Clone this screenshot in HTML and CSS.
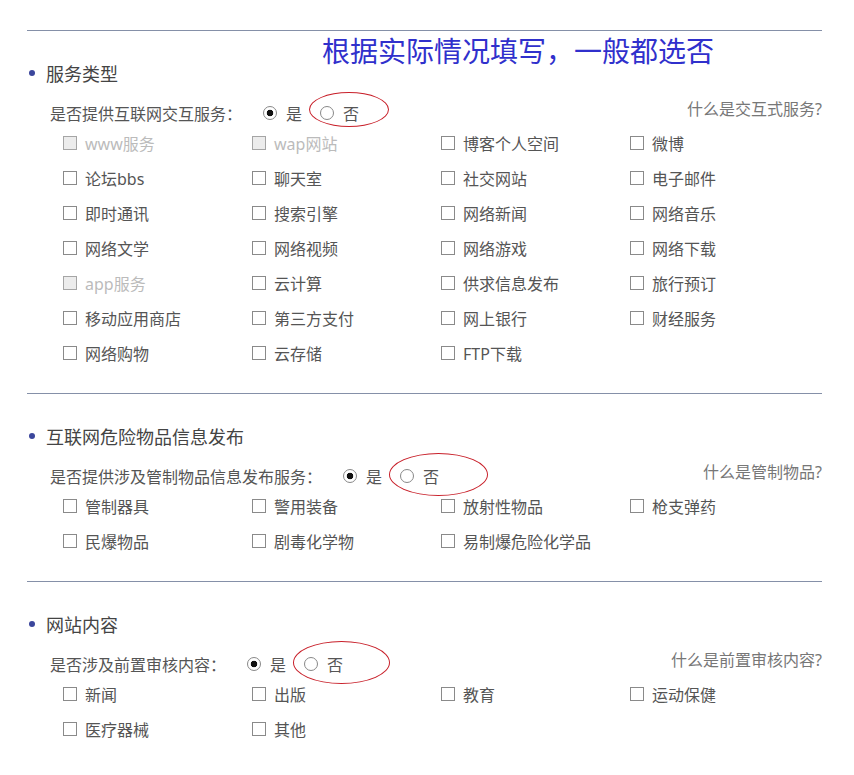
FILE: index.html
```html
<!DOCTYPE html>
<html lang="zh-CN">
<head>
    <meta charset="UTF-8">
    <title>服务类型</title>
    <link rel="stylesheet" href="styles.css">
</head>
<body>
<div class="wrap">
    <div class="note">根据实际情况填写，一般都选否</div>

    <div class="section">
        <div class="title">服务类型</div>
        <div class="ask">
            <span class="ask-label">是否提供互联网交互服务：</span>
            <label class="opt"><input type="radio" name="q1" checked> 是</label>
            <label class="opt"><input type="radio" name="q1"> 否<span class="ring ring-sm"></span></label>
            <a class="help">什么是交互式服务?</a>
        </div>
        <div class="checks">
            <label class="off"><input type="checkbox" disabled> www服务</label>
            <label class="off"><input type="checkbox" disabled> wap网站</label>
            <label><input type="checkbox"> 博客个人空间</label>
            <label><input type="checkbox"> 微博</label>
            <label><input type="checkbox"> 论坛bbs</label>
            <label><input type="checkbox"> 聊天室</label>
            <label><input type="checkbox"> 社交网站</label>
            <label><input type="checkbox"> 电子邮件</label>
            <label><input type="checkbox"> 即时通讯</label>
            <label><input type="checkbox"> 搜索引擎</label>
            <label><input type="checkbox"> 网络新闻</label>
            <label><input type="checkbox"> 网络音乐</label>
            <label><input type="checkbox"> 网络文学</label>
            <label><input type="checkbox"> 网络视频</label>
            <label><input type="checkbox"> 网络游戏</label>
            <label><input type="checkbox"> 网络下载</label>
            <label class="off"><input type="checkbox" disabled> app服务</label>
            <label><input type="checkbox"> 云计算</label>
            <label><input type="checkbox"> 供求信息发布</label>
            <label><input type="checkbox"> 旅行预订</label>
            <label><input type="checkbox"> 移动应用商店</label>
            <label><input type="checkbox"> 第三方支付</label>
            <label><input type="checkbox"> 网上银行</label>
            <label><input type="checkbox"> 财经服务</label>
            <label><input type="checkbox"> 网络购物</label>
            <label><input type="checkbox"> 云存储</label>
            <label><input type="checkbox"> FTP下载</label>
        </div>
    </div>

    <div class="section">
        <div class="title">互联网危险物品信息发布</div>
        <div class="ask">
            <span class="ask-label">是否提供涉及管制物品信息发布服务：</span>
            <label class="opt"><input type="radio" name="q2" checked> 是</label>
            <label class="opt"><input type="radio" name="q2"> 否<span class="ring ring-wide"></span></label>
            <a class="help">什么是管制物品?</a>
        </div>
        <div class="checks">
            <label><input type="checkbox"> 管制器具</label>
            <label><input type="checkbox"> 警用装备</label>
            <label><input type="checkbox"> 放射性物品</label>
            <label><input type="checkbox"> 枪支弹药</label>
            <label><input type="checkbox"> 民爆物品</label>
            <label><input type="checkbox"> 剧毒化学物</label>
            <label><input type="checkbox"> 易制爆危险化学品</label>
        </div>
    </div>

    <div class="section">
        <div class="title">网站内容</div>
        <div class="ask">
            <span class="ask-label">是否涉及前置审核内容：</span>
            <label class="opt"><input type="radio" name="q3" checked> 是</label>
            <label class="opt"><input type="radio" name="q3"> 否<span class="ring"></span></label>
            <a class="help">什么是前置审核内容?</a>
        </div>
        <div class="checks">
            <label><input type="checkbox"> 新闻</label>
            <label><input type="checkbox"> 出版</label>
            <label><input type="checkbox"> 教育</label>
            <label><input type="checkbox"> 运动保健</label>
            <label><input type="checkbox"> 医疗器械</label>
            <label><input type="checkbox"> 其他</label>
        </div>
    </div>
</div>
</body>
</html>
```

FILE: styles.css
```css
body {
    margin: 0;
    background: #ffffff;
    font-family: "Noto Sans", "Noto Sans CJK SC", sans-serif;
    color: #555;
}

.wrap {
    position: relative;
    width: 795px;
    margin-left: 27px;
    padding-top: 30px;
}

.note {
    position: absolute;
    left: 295px;
    top: 36px;
    font-family: "Liberation Serif", "Noto Sans CJK SC", serif;
    font-size: 28px;
    line-height: 34px;
    color: #3030cc;
    white-space: nowrap;
}

.section {
    border-top: 1px solid #8590a8;
    padding-top: 30px;
    padding-bottom: 23px;
}

.title {
    display: flex;
    align-items: center;
    height: 24px;
    font-size: 18px;
    color: #444;
}

.title::before {
    content: "";
    width: 6px;
    height: 6px;
    border-radius: 50%;
    background: #3b469c;
    margin: 0 11px 0 2px;
}

.ask {
    display: flex;
    align-items: center;
    height: 24px;
    margin-top: 16px;
    padding-left: 23px;
    font-size: 16px;
}

.ask-label {
    font-family: "Noto Sans CJK SC", sans-serif;
    text-spacing-trim: space-all;
    margin-right: 21px;
}

.opt {
    position: relative;
    display: flex;
    align-items: center;
    margin-right: 18px;
}

.help {
    margin-left: auto;
    margin-bottom: 10px;
    color: #777;
}

input[type="radio"] {
    appearance: none;
    width: 14px;
    height: 14px;
    margin: 0 9px 0 0;
    border: 1px solid #888;
    border-radius: 50%;
    background: #fff;
}

input[type="radio"]:checked {
    background: radial-gradient(circle, #111 0 3px, #fff 3.6px);
}

.ring {
    position: absolute;
    left: -11px;
    top: -11px;
    width: 97px;
    height: 43px;
    border: 1px solid #c8202a;
    border-radius: 50%;
    box-sizing: border-box;
}

.ring-wide {
    width: 99px;
}

.ring-sm {
    width: 80px;
    height: 35px;
    top: -9px;
}

.checks {
    display: grid;
    grid-template-columns: repeat(4, 189px);
    grid-auto-rows: 35px;
    padding-left: 36px;
    font-size: 16px;
}

.checks label {
    display: flex;
    align-items: center;
    white-space: nowrap;
}

input[type="checkbox"] {
    appearance: none;
    width: 14px;
    height: 14px;
    margin: 0 8px 0 0;
    border: 1.5px solid #8a8a8a;
    background: #fff;
}

.checks .off {
    color: #bbb;
}

.checks .off input {
    background: #ececec;
    border-color: #a5a5a5;
}
```
